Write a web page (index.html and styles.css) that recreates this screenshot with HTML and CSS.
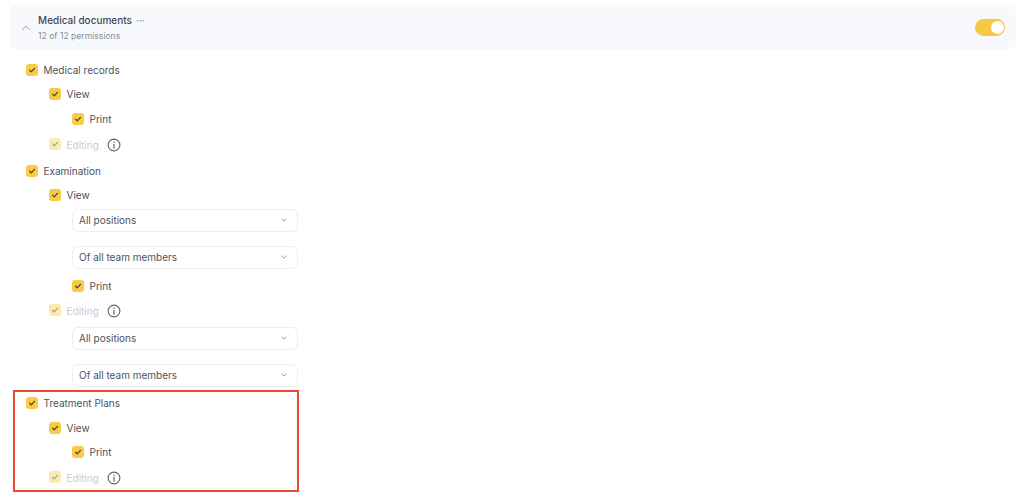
FILE: index.html
```html
<!DOCTYPE html>
<html lang="en">
<head>
<meta charset="utf-8">
<title>Medical documents</title>
<link rel="stylesheet" href="styles.css">
</head>
<body>
<svg class="defs" width="0" height="0" aria-hidden="true">
  <symbol id="chk" viewBox="0 0 12 12"><path d="M3.6 6.2 5.2 7.8 8.5 4.4" fill="none" stroke="currentColor" stroke-width="1.2" stroke-linecap="round" stroke-linejoin="round"/></symbol>
  <symbol id="info" viewBox="0 0 14 14"><circle cx="7" cy="7" r="5.9" fill="none" stroke="currentColor" stroke-width="1.1"/><path d="M7 6.4V10" fill="none" stroke="currentColor" stroke-width="1.2" stroke-linecap="round"/><circle cx="7" cy="4.3" r=".75" fill="currentColor"/></symbol>
  <symbol id="chev" viewBox="0 0 8 8"><path d="M1.8 3 4 5.2 6.2 3" fill="none" stroke="currentColor" stroke-width="1" stroke-linecap="round" stroke-linejoin="round"/></symbol>
</svg>
<main class="page">
  <header class="panel">
    <svg class="collapse" width="10" height="10" viewBox="0 0 10 10"><path d="M1.6 6.6 5 3.2l3.4 3.4" fill="none" stroke="currentColor" stroke-width="1" stroke-linecap="round" stroke-linejoin="round"/></svg>
    <div class="panel-text">
      <div class="panel-title"><span>Medical documents</span><span class="dots">···</span></div>
      <div class="panel-sub">12 of 12 permissions</div>
    </div>
    <span class="toggle"><span class="knob"></span></span>
  </header>

  <section class="tree">
    <div class="row l1"><span class="box"><svg width="12" height="12"><use href="#chk"/></svg></span>Medical records</div>
    <div class="row l2"><span class="box"><svg width="12" height="12"><use href="#chk"/></svg></span>View</div>
    <div class="row l3 gap1"><span class="box"><svg width="12" height="12"><use href="#chk"/></svg></span>Print</div>
    <div class="row l2 gap2 off"><span class="box"><svg width="12" height="12"><use href="#chk"/></svg></span><span class="lbl">Editing</span><svg class="info" width="14" height="14"><use href="#info"/></svg></div>

    <div class="row l1 gap2"><span class="box"><svg width="12" height="12"><use href="#chk"/></svg></span>Examination</div>
    <div class="row l2"><span class="box"><svg width="12" height="12"><use href="#chk"/></svg></span>View</div>
    <div class="select first"><span>All positions</span><svg width="8" height="8"><use href="#chev"/></svg></div>
    <div class="select"><span>Of all team members</span><svg width="8" height="8"><use href="#chev"/></svg></div>
    <div class="row l3 gap5"><span class="box"><svg width="12" height="12"><use href="#chk"/></svg></span>Print</div>
    <div class="row l2 gap1 off"><span class="box"><svg width="12" height="12"><use href="#chk"/></svg></span><span class="lbl">Editing</span><svg class="info" width="14" height="14"><use href="#info"/></svg></div>
    <div class="select second"><span>All positions</span><svg width="8" height="8"><use href="#chev"/></svg></div>
    <div class="select"><span>Of all team members</span><svg width="8" height="8"><use href="#chev"/></svg></div>

    <div class="row l1 gap4"><span class="box"><svg width="12" height="12"><use href="#chk"/></svg></span>Treatment Plans</div>
    <div class="row l2 gap1"><span class="box"><svg width="12" height="12"><use href="#chk"/></svg></span>View</div>
    <div class="row l3"><span class="box"><svg width="12" height="12"><use href="#chk"/></svg></span>Print</div>
    <div class="row l2 gap2 off"><span class="box"><svg width="12" height="12"><use href="#chk"/></svg></span><span class="lbl">Editing</span><svg class="info" width="14" height="14"><use href="#info"/></svg></div>
  </section>
  <div class="highlight"></div>
</main>
</body>
</html>
```
FILE: styles.css
```css
* { box-sizing: border-box; }
html, body { margin: 0; height: 100%; background: #fff; overflow: hidden; }
body { font-family: Inter, "Liberation Sans", sans-serif; font-size: 10px; color: #4f5159; }
.defs { position: absolute; }
.page { position: relative; padding: 5px 8px 0 9px; }

.panel { display: flex; align-items: center; height: 45px; background: #f8f9fd; border-radius: 8px; padding: 0 11px 0 12px; }
.collapse { color: #9a9ca6; margin-right: 7px; flex: none; }
.panel-text { flex: 1; display: flex; flex-direction: column; gap: 4px; padding-top: 1px; }
.panel-title { font-size: 10px; font-weight: 500; color: #45474f; display: flex; gap: 4px; line-height: 13px; }
.dots { color: #8f919b; letter-spacing: -.2px; font-size: 10px; }
.panel-sub { font-size: 8.6px; color: #8b8d97; line-height: 11px; }
.toggle { width: 30px; height: 17px; border-radius: 9px; background: #f8c840; display: flex; align-items: center; justify-content: flex-end; padding-right: 1.5px; }
.knob { width: 13px; height: 13px; border-radius: 50%; background: #fff; }

.tree { padding: 8px 0 0 17px; display: flex; flex-direction: column; }
.row { display: flex; align-items: center; height: 24px; gap: 5.5px; }
.l2 { margin-left: 23px; }
.l3 { margin-left: 46px; }
.gap1 { margin-top: 1px; }
.gap2 { margin-top: 2px; }
.gap4 { margin-top: 4px; }
.gap5 { margin-top: 5px; }
.box { width: 12px; height: 12px; flex: none; border-radius: 3px; background: #f9cb45; color: #3b3b3f; display: flex; }
.off .box { background: #fceaaa; color: #9c9ea8; position: relative; top: -1px; }
.off .lbl { color: #c9cbd3; }
.info { color: #62646c; margin-left: 3px; flex: none; }

.select { margin-left: 46px; width: 226px; height: 23px; border: 1px solid #eceef2; border-radius: 6px; padding: 0 9px 1px 6px; display: flex; align-items: center; justify-content: space-between; margin-top: 14px; color: #4f5159; }
.select svg { color: #9a9ca6; }
.select.first { margin-top: 2px; }
.select.second { margin-top: 4px; }

.highlight { position: absolute; left: 13px; top: 390px; width: 286px; height: 102px; border: 2px solid #ea4a34; }
```
